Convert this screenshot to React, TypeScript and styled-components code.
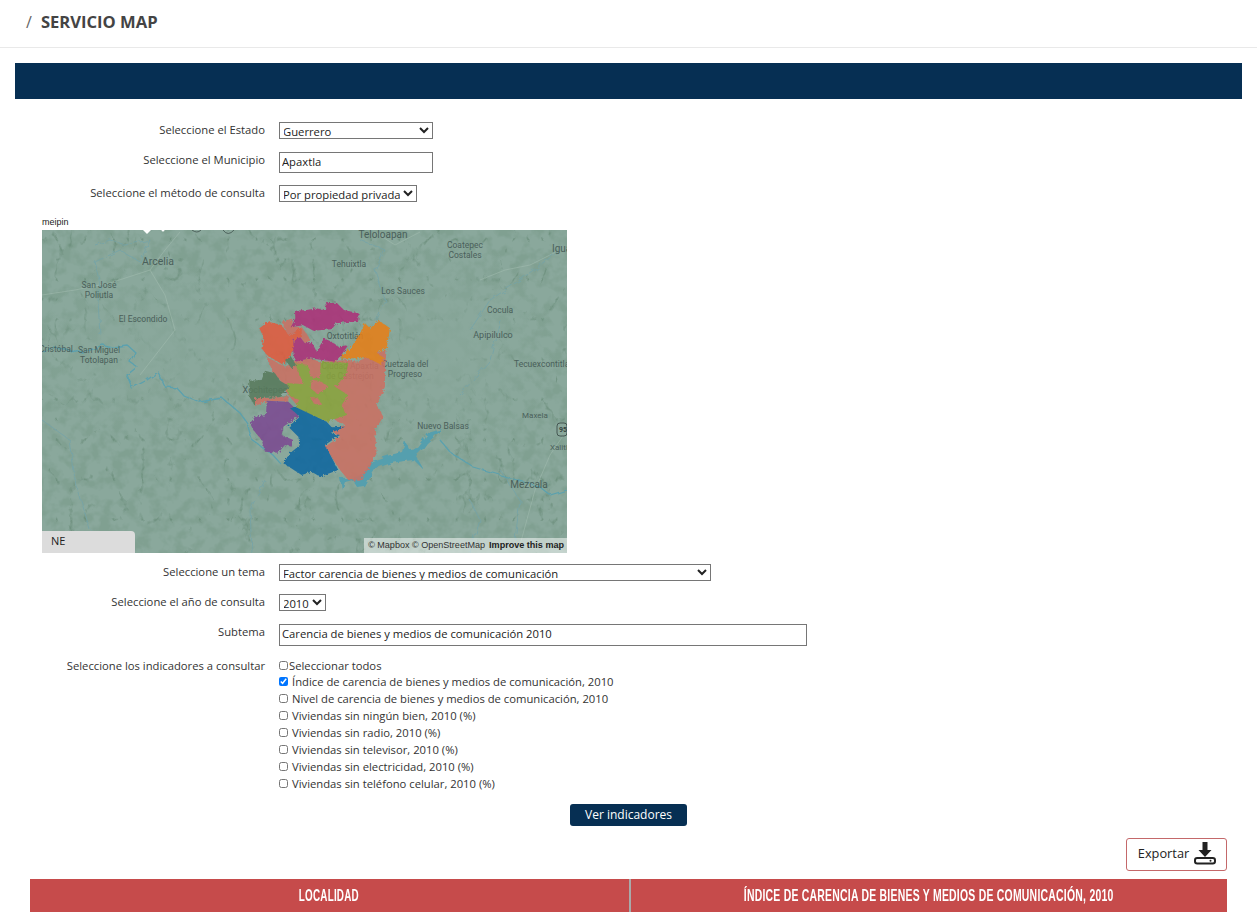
import React from "react";
import styled, { createGlobalStyle } from "styled-components";

const Global = createGlobalStyle`
  html, body { margin: 0; padding: 0; background: #fff; overflow: hidden; }
  body { font-family: "Open Sans", "Liberation Sans", sans-serif; color: #212529; }
`;

const Page = styled.div`
  width: 1257px;
  height: 912px;
  overflow: hidden;
`;

const TopBar = styled.header`
  border-bottom: 1px solid #e9e9e9;
  display: flex;
  align-items: center;
  padding: 0 0 3px 26px;
  box-sizing: border-box;
  height: 48px;
  gap: 10px;
  color: #444;
`;

const Slash = styled.span`
  font-size: 16px;
  color: #666;
`;

const Title = styled.h1`
  margin: 0 0 2px -1px;
  font-size: 16.6px;
  font-weight: 700;
  color: #444;
`;

const Banner = styled.div`
  height: 36px;
  margin: 15px 15px 0;
  background: #062f53;
`;

const Form = styled.form`
  display: flex;
  flex-direction: column;
  padding-top: 23px;
`;

const Row = styled.div<{ $top?: number }>`
  display: grid;
  grid-template-columns: 265px 1fr;
  column-gap: 14px;
  align-items: start;
  margin-top: ${p => p.$top ?? 0}px;
`;

const Label = styled.label`
  font-size: 11.25px;
  line-height: 16px;
  text-align: right;
  color: #333;
`;

const Select = styled.select<{ $w: number }>`
  display: block;
  width: ${p => p.$w}px;
  height: 17px;
  margin-bottom: 1px;
  padding: 0;
  text-indent: -1px;
  font-family: "Open Sans", sans-serif;
  font-size: 11.25px;
  background: #fff;
  color: #222;
  border: 1px solid #767676;
  border-radius: 0;
`;

const TextInput = styled.input<{ $w: number; $h: number }>`
  display: block;
  box-sizing: border-box;
  width: ${p => p.$w}px;
  height: ${p => p.$h}px;
  padding: 0 2px ${p => (p.$h % 2 ? 2 : 3)}px;
  font-family: "Open Sans", sans-serif;
  font-size: 11.25px;
  color: #222;
  border: 1px solid #767676;
  border-radius: 0;
  outline: none;
`;

const MapBlock = styled.div`
  margin: 12px 0 0 42px;
  width: 525px;
`;

const MapName = styled.div`
  font-family: "Liberation Sans", Arial, sans-serif;
  font-size: 9px;
  line-height: 15px;
  height: 15px;
  color: #222;
`;

const MapFrame = styled.div`
  position: relative;
  width: 525px;
  height: 323px;
  overflow: hidden;
  background: #8aa89c;
`;

const MapSvg = styled.svg`
  display: block;
`;

const Legend = styled.div`
  position: absolute;
  left: 0;
  bottom: 0;
  width: 93px;
  height: 22px;
  box-sizing: border-box;
  padding-left: 9px;
  background: #dcdcdc;
  border-top-right-radius: 4px;
  font-size: 11px;
  line-height: 20px;
  color: #222;
`;

const Attribution = styled.div`
  position: absolute;
  right: 0;
  bottom: 0;
  height: 15px;
  padding: 0 3px 0 4px;
  background: rgba(255, 255, 255, 0.5);
  font-family: "Liberation Sans", Arial, sans-serif;
  font-size: 9.05px;
  line-height: 15px;
  color: #333;
  white-space: nowrap;
  b { margin-left: 1.5px; color: #222; }
`;

const Checks = styled.div`
  display: flex;
  flex-direction: column;
  margin-top: -1px;
  font-size: 11.25px;
`;

const CheckRow = styled.label<{ $tight?: boolean }>`
  display: flex;
  align-items: center;
  height: ${p => (p.$tight ? "16px" : "17px")};
  gap: ${p => (p.$tight ? "1px" : "4px")};
  color: #333;
  white-space: nowrap;
`;

const Check = styled.input`
  width: 9px;
  height: 9px;
  margin: 0;
`;

const Actions = styled.div`
  display: flex;
  justify-content: center;
  margin-top: 12px;
`;

const PrimaryButton = styled.button`
  width: 117px;
  height: 22px;
  padding: 0 0 1px;
  border: 0;
  border-radius: 3px;
  background: #062f53;
  color: #fff;
  font-family: "Open Sans", sans-serif;
  font-size: 12px;
`;

const ExportRow = styled.div`
  display: flex;
  justify-content: flex-end;
  padding-right: 30px;
  margin-top: 12px;
`;

const ExportButton = styled.button`
  display: flex;
  align-items: center;
  justify-content: center;
  gap: 4px;
  width: 101px;
  height: 33px;
  padding: 0 0 3px 2px;
  box-sizing: border-box;
  background: #fff;
  border: 1px solid #c4686a;
  border-radius: 3px;
  font-family: "Open Sans", sans-serif;
  font-size: 12.8px;
  color: #222;
`;

const TableHead = styled.div`
  display: grid;
  grid-template-columns: 1fr 1fr;
  margin: 8px 30px 0;
  height: 33px;
  background: #c64b4b;
`;

const HeadCell = styled.div<{ $last?: boolean }>`
  display: flex;
  align-items: center;
  justify-content: center;
  overflow: hidden;
  border-left: ${p => (p.$last ? "2px solid #a9a9a9" : "0")};
`;

const HeadText = styled.span<{ $sx: number }>`
  display: inline-block;
  flex: none;
  font-family: "Liberation Sans", sans-serif;
  font-weight: 700;
  font-size: 17px;
  letter-spacing: 0.4px;
  color: #fff;
  text-transform: uppercase;
  white-space: nowrap;
  transform: scaleX(${p => p.$sx});
`;

const indicators = [
  "Índice de carencia de bienes y medios de comunicación, 2010",
  "Nivel de carencia de bienes y medios de comunicación, 2010",
  "Viviendas sin ningún bien, 2010 (%)",
  "Viviendas sin radio, 2010 (%)",
  "Viviendas sin televisor, 2010 (%)",
  "Viviendas sin electricidad, 2010 (%)",
  "Viviendas sin teléfono celular, 2010 (%)",
];

// x, y in page coordinates, size, anchor
const places: [string, number, number, number, string?][] = [
  ["Arcelia", 158, 265, 10.5],
  ["San José", 99, 288, 8.5],
  ["Poliutla", 99, 298, 8.5],
  ["El Escondido", 143, 322, 8.5],
  ["Cristóbal", 56, 352, 8.5],
  ["San Miguel", 99, 353, 8.5],
  ["Totolapan", 99, 363, 8.5],
  ["Xochitepec", 265, 393, 9],
  ["Teloloapan", 383, 238, 10],
  ["Tehuixtla", 349, 267, 8.5],
  ["Los Sauces", 403, 294, 8.5],
  ["Coatepec", 465, 248, 8.5],
  ["Costales", 465, 258, 8.5],
  ["Igua", 552, 252, 10, "start"],
  ["Cocula", 500, 313, 8.5],
  ["Apipilulco", 493, 338, 9],
  ["Tecuexcontitlán", 514, 367, 8.5, "start"],
  ["Oxtotitlán", 345, 339, 8.5],
  ["Ciudad Apaxtla", 350, 369, 8.5],
  ["de Castrejón", 350, 379, 8.5],
  ["Cuetzala del", 405, 367, 8.5],
  ["Progreso", 405, 377, 8.5],
  ["Maxela", 535, 418, 8],
  ["Nuevo Balsas", 443, 429, 8.5],
  ["Xalitla", 550, 450, 8, "start"],
  ["Mezcala", 529, 488, 10],
];

// polygons in a 3x coordinate system from (220, 290)
const regions: [string, string][] = [
  ["#cc6f62", "140,200 195,230 225,215 270,205 300,215 385,210 410,215 470,190 500,180 495,230 495,290 470,345 490,380 465,420 470,490 450,530 420,572 385,570 360,540 340,510 315,470 360,440 330,420 375,405 335,385 320,380 230,345 205,315 180,270 160,250"],
  ["#cc6f62", "185,95 220,85 215,110 245,110 272,150 255,160 240,140 220,150 205,135"],
  ["#cc6f62", "105,325 175,322 205,318 205,335 145,332 105,348"],
  ["#cc6f62", "110,430 135,430 138,446 120,446"],
  ["#e87f14", "360,205 395,170 420,130 435,100 450,115 478,92 510,115 500,175 470,190 495,205 480,222 445,205 410,205"],
  ["#ad2f78", "225,62 260,60 290,55 320,62 316,40 350,38 372,60 416,70 415,92 350,100 335,118 280,122 250,106 212,112 226,85"],
  ["#ad2f78", "220,150 240,140 255,160 275,155 290,185 312,145 335,155 355,170 385,165 360,200 345,215 305,210 270,205 225,215 218,175"],
  ["#e35a3d", "118,115 145,95 185,105 208,138 245,112 245,140 220,150 220,180 190,225 140,195 125,175 130,140"],
  ["#8ba33a", "225,220 265,225 270,262 300,265 302,215 385,218 378,250 360,275 345,290 385,315 365,345 380,375 322,395 260,370 225,350 238,330 205,315 205,280 250,282"],
  ["#cc6f62", "275,270 300,272 325,290 292,312 272,295"],
  ["#cc6f62", "272,322 292,322 306,345 282,342"],
  ["#587a5c", "88,272 125,270 135,242 165,250 180,272 210,290 175,320 205,318 175,322 105,325 105,348 88,320"],
  ["#587a5c", "195,210 212,198 228,225 215,235"],
  ["#7c4a92", "140,332 205,335 225,355 240,375 190,410 185,435 220,450 215,470 195,465 175,488 135,485 125,450 100,420 90,400 105,380 138,375"],
  ["#0f66a0", "210,355 225,350 320,395 335,412 375,410 330,430 360,435 315,465 355,540 300,560 275,545 245,555 190,520 210,490 240,465 235,440 205,410 240,380"],
];

const rivers = [
  "M42 353L53 347 70 350 83 353 103 345 112 347 127 345 135 352 130 362 137 367 127 375 132 388 147 380 158 372 165 387 177 388 183 395 200 402 222 398 240 413 247 423 252 440 273 455 280 463",
  "M440 440L450 452 473 467 507 477 540 487 550 495 567 490",
];

const creeks = [
  "M95 245L110 240 125 245 150 240 140 262 120 250 95 262 100 280 98 300 100 335",
  "M360 240L385 250 375 270 385 300 375 320",
  "M42 420L70 440 75 480 90 530",
  "M265 480L250 510 252 553",
  "M515 540L520 500 500 470",
  "M470 553L480 520 470 500",
  "M470 330L490 300 520 280 560 250",
  "M460 395L490 360 500 320",
];

const roads = [
  "M42 295L75 290 110 283 150 270 165 250 180 232",
  "M150 270L165 295 175 330 140 375",
  "M375 232L395 245 420 232",
  "M520 545L535 490 550 455 567 430",
  "M480 280L505 270 530 265 560 250",
];

function MapDrawing() {
  return (
    <MapSvg width="525" height="323" viewBox="42 230 525 323">
      <defs>
        <filter id="ridges" x="0" y="0" width="100%" height="100%" colorInterpolationFilters="sRGB">
          <feTurbulence type="turbulence" baseFrequency="0.035 0.025" numOctaves="4" seed="23" />
          <feColorMatrix type="matrix" values="0 0 0 0 0.38  0 0 0 0 0.52  0 0 0 0 0.44  -9 0 0 0 1.25" />
        </filter>
        <filter id="shade" x="0" y="0" width="100%" height="100%" colorInterpolationFilters="sRGB">
          <feTurbulence type="fractalNoise" baseFrequency="0.08" numOctaves="3" seed="7" />
          <feColorMatrix type="matrix" values="0 0 0 0 0.42  0 0 0 0 0.56  0 0 0 0 0.48  4 0 0 0 -1.7" />
        </filter>
        <filter id="wiggle" x="-5%" y="-5%" width="110%" height="110%">
          <feTurbulence type="fractalNoise" baseFrequency="0.12" numOctaves="2" seed="9" />
          <feDisplacementMap in="SourceGraphic" scale="6" />
        </filter>
        <filter id="rough" x="-5%" y="-5%" width="110%" height="110%">
          <feTurbulence type="fractalNoise" baseFrequency="0.14" numOctaves="3" seed="4" />
          <feDisplacementMap in="SourceGraphic" scale="12" />
        </filter>
        <radialGradient id="flat">
          <stop offset="0" stopColor="#8aa89c" stopOpacity="0.8" />
          <stop offset="1" stopColor="#8aa89c" stopOpacity="0" />
        </radialGradient>
      </defs>
      <rect x="42" y="230" width="525" height="323" fill="#8aa89c" />
      <rect x="42" y="230" width="525" height="323" filter="url(#shade)" opacity="0.3" />
      <rect x="42" y="230" width="525" height="323" filter="url(#ridges)" opacity="0.55" />
      <ellipse cx="150" cy="350" rx="130" ry="90" fill="url(#flat)" />
      <ellipse cx="450" cy="350" rx="110" ry="110" fill="url(#flat)" />
      {roads.map(d => (
        <path key={d} d={d} fill="none" stroke="#a6bfb4" strokeWidth="0.8" opacity="0.6" />
      ))}
      <g filter="url(#wiggle)">
        {creeks.map(d => (
          <path key={d} d={d} fill="none" stroke="#73a3a8" strokeWidth="0.8" />
        ))}
        {rivers.map(d => (
          <path key={d} d={d} fill="none" stroke="#5ba1ae" strokeWidth="1.3" />
        ))}
        <path d="M372 461L390 455 402 452 405 441 409 449 418 448 424 440 428 433 442 429 434 437 427 443 422 450 416 456 424 470 414 460 404 461 392 463 376 468 370 478 365 487 358 488 353 480 345 482 342 490 340 478 352 478 362 475Z" fill="#559fae" />
      </g>
      {places.map(([name, x, y, size, anchor]) => (
        <text
          key={name}
          x={x}
          y={y}
          fontFamily="Roboto, sans-serif"
          fontSize={size}
          textAnchor={anchor ?? "middle"}
          fill="#4a5f5a"
        >
          {name}
        </text>
      ))}
      <path d="M143 230h8l-4 4z" fill="#fff" />
      <circle cx="163" cy="230" r="1.5" fill="#fff" />
      <path d="M192 230q5 4 9 0M223 230q5 7 11 0" fill="none" stroke="#3f524d" strokeWidth="0.8" />
      <rect x="557" y="423" width="10" height="13" rx="3" fill="#8aa89c" stroke="#34433f" strokeWidth="0.8" />
      <text x="559" y="432" fontFamily="Roboto, sans-serif" fontSize="7" fontWeight="700" fill="#34433f">95</text>
      <g transform="translate(220 290) scale(0.3333)" filter="url(#rough)" opacity="0.86">
        {regions.map(([fill, points]) => (
          <polygon key={points} points={points} fill={fill} />
        ))}
      </g>
    </MapSvg>
  );
}

function DownloadIcon() {
  return (
    <svg width="24" height="24" viewBox="0 0 24 24">
      <path d="M9.5 1h5v8h4l-6.5 7-6.5-7h4z" fill="#222" />
      <rect x="2" y="17" width="20" height="5.4" rx="2.2" fill="#fff" stroke="#222" strokeWidth="2" />
      <circle cx="17.5" cy="19.7" r="1" fill="#222" />
    </svg>
  );
}

export default function App() {
  return (
    <Page>
      <Global />
      <TopBar>
        <Slash>/</Slash>
        <Title>SERVICIO MAP</Title>
      </TopBar>
      <Banner />
      <Form onSubmit={e => e.preventDefault()}>
        <Row>
          <Label>Seleccione el Estado</Label>
          <Select $w={154} defaultValue="Guerrero">
            <option>Guerrero</option>
          </Select>
        </Row>
        <Row $top={12}>
          <Label>Seleccione el Municipio</Label>
          <TextInput $w={154} $h={21} readOnly value="Apaxtla" />
        </Row>
        <Row $top={12}>
          <Label>Seleccione el método de consulta</Label>
          <Select $w={138} defaultValue="Por propiedad privada">
            <option>Por propiedad privada</option>
          </Select>
        </Row>
        <MapBlock>
          <MapName>meipin</MapName>
          <MapFrame>
            <MapDrawing />
            <Legend>NE</Legend>
            <Attribution>
              © Mapbox © OpenStreetMap <b>Improve this map</b>
            </Attribution>
          </MapFrame>
        </MapBlock>
        <Row $top={11}>
          <Label>Seleccione un tema</Label>
          <Select $w={432}>
            <option>Factor carencia de bienes y medios de comunicación</option>
          </Select>
        </Row>
        <Row $top={12}>
          <Label>Seleccione el año de consulta</Label>
          <Select $w={47}>
            <option>2010</option>
          </Select>
        </Row>
        <Row $top={12}>
          <Label>Subtema</Label>
          <TextInput $w={528} $h={22} readOnly value="Carencia de bienes y medios de comunicación 2010" />
        </Row>
        <Row $top={12}>
          <Label>Seleccione los indicadores a consultar</Label>
          <Checks>
            <CheckRow $tight>
              <Check type="checkbox" />
              Seleccionar todos
            </CheckRow>
            {indicators.map((text, i) => (
              <CheckRow key={text}>
                <Check type="checkbox" defaultChecked={i === 0} />
                {text}
              </CheckRow>
            ))}
          </Checks>
        </Row>
        <Actions>
          <PrimaryButton type="button">Ver indicadores</PrimaryButton>
        </Actions>
      </Form>
      <ExportRow>
        <ExportButton type="button">
          Exportar
          <DownloadIcon />
        </ExportButton>
      </ExportRow>
      <TableHead>
        <HeadCell>
          <HeadText $sx={0.58}>Localidad</HeadText>
        </HeadCell>
        <HeadCell $last>
          <HeadText $sx={0.613}>Índice de carencia de bienes y medios de comunicación, 2010</HeadText>
        </HeadCell>
      </TableHead>
    </Page>
  );
}
